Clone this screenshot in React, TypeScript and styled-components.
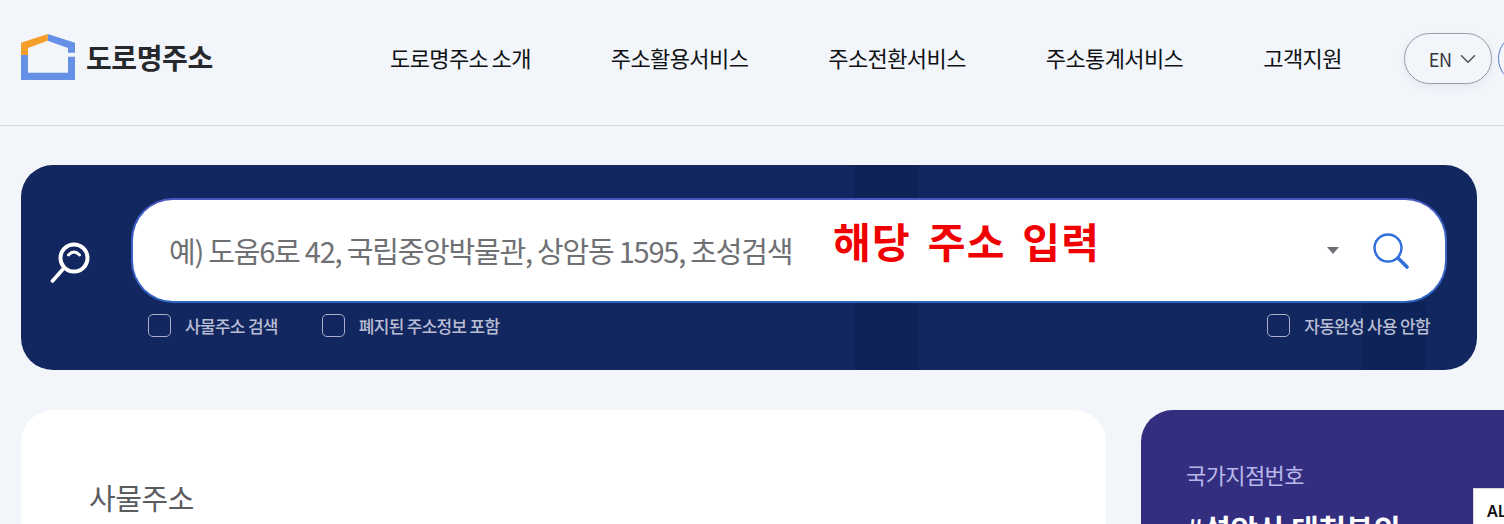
import styled, { createGlobalStyle } from 'styled-components';
import { ChevronDown } from 'lucide-react';

const GlobalStyle = createGlobalStyle`
  html, body {
    margin: 0;
    height: 524px;
    overflow: hidden;
    background: #f2f5fa;
  }
  * { box-sizing: border-box; }
  body {
    font-family: "Noto Sans CJK KR", "Noto Sans", sans-serif;
  }
`;

const Page = styled.div`
  width: 1504px;
  height: 524px;
  overflow: hidden;
`;

const Header = styled.header`
  display: flex;
  align-items: center;
  width: 1504px;
  height: 126px;
  padding: 0 0 8px 21px;
  border-bottom: 1px solid #d5d8de;
`;

const Logo = styled.div`
  display: flex;
  align-items: center;
  gap: 11px;
  width: 369px;
  margin-bottom: 4px;
  flex: none;
`;

const LogoText = styled.span`
  font-size: 28px;
  font-weight: 700;
  letter-spacing: -0.4px;
  color: #26282b;
  line-height: 1;
`;

const Nav = styled.nav`
  display: flex;
  gap: 80px;
  margin-bottom: 3px;
  flex: none;
`;

const NavLink = styled.a`
  font-size: 22px;
  font-weight: 400;
  letter-spacing: -0.6px;
  word-spacing: -1px;
  color: #0f1114;
  white-space: nowrap;
  line-height: 1;
`;

const Utilities = styled.div`
  display: flex;
  align-items: center;
  gap: 6px;
  margin-left: 62px;
  flex: none;
`;

const LangButton = styled.button`
  display: flex;
  align-items: center;
  gap: 3px;
  width: 88px;
  height: 51px;
  padding: 0 0 0 24px;
  border: 1px solid #9a9da3;
  border-radius: 26px;
  background: #f2f5fa;
  box-shadow: 0 3px 8px rgba(40, 50, 80, 0.07);
  color: #33363b;
  font: 400 18px "Noto Sans CJK KR", sans-serif;
  letter-spacing: -0.4px;
`;

const RoundButton = styled.button`
  width: 51px;
  height: 51px;
  padding: 0;
  flex: none;
  border: 1px solid #4f78c9;
  border-radius: 50%;
  background: #f2f5fa;
`;

const SearchPanel = styled.section`
  position: relative;
  display: flex;
  flex-direction: column;
  width: 1456px;
  height: 205px;
  margin: 39px 0 0 21px;
  padding: 33px 30px 0 110px;
  border-radius: 32px;
  background-color: #12275f;
  background-image:
    linear-gradient(#0e2357, #0e2357),
    linear-gradient(#0e2357, #0e2357);
  background-repeat: no-repeat;
  background-size: 64px 100%, 64px 68px;
  background-position: 833px 0, 1342px 100%;
`;

const PanelIcon = styled.svg`
  position: absolute;
  left: 29px;
  top: 77px;
`;

const SearchBox = styled.div`
  position: relative;
  display: flex;
  align-items: center;
  height: 105px;
  padding: 0 35px 0 36px;
  border: 2px solid;
  border-color: #4b57c0 #3b63c4 #2f65c2 #3b5fc6;
  border-radius: 42px;
  background: #fff;
`;

const Placeholder = styled.span`
  padding-bottom: 2px;
  font-size: 29px;
  font-weight: 400;
  letter-spacing: -1.22px;
  color: #6f7074;
  white-space: nowrap;
`;

const RedNote = styled.span`
  position: absolute;
  left: 700px;
  top: 10px;
  font-size: 41px;
  font-weight: 700;
  line-height: 60px;
  color: #f00000;
  letter-spacing: 1.3px;
  word-spacing: 6px;
  white-space: nowrap;
`;

const BoxActions = styled.div`
  display: flex;
  align-items: center;
  gap: 33px;
  margin-left: auto;
`;

const Caret = styled.span`
  width: 0;
  height: 0;
  border-left: 6px solid transparent;
  border-right: 6px solid transparent;
  border-top: 7px solid #6d6e73;
`;

const OptionRow = styled.div`
  display: flex;
  align-items: center;
  gap: 44px;
  height: 23px;
  margin-top: 11px;
  padding: 0 17px;
`;

const Option = styled.label<{ $push?: boolean }>`
  display: flex;
  align-items: center;
  gap: 14px;
  margin-left: ${(p) => (p.$push ? 'auto' : '0')};
  font-size: 17px;
  font-weight: 500;
  letter-spacing: -0.7px;
  color: #b9bdd4;
  white-space: nowrap;
`;

const CheckBox = styled.span`
  width: 23px;
  height: 23px;
  flex: none;
  border: 1px solid #aab0c8;
  border-radius: 5px;
`;

const Lower = styled.div`
  display: flex;
  gap: 35px;
  margin: 40px 0 0 21px;
`;

const MainCard = styled.section`
  width: 1085px;
  height: 200px;
  flex: none;
  padding: 65px 68px 0;
  border-radius: 32px;
  background: #fff;
`;

const CardTitle = styled.h2`
  margin: 0;
  font-size: 29px;
  font-weight: 400;
  letter-spacing: -0.4px;
  line-height: 44px;
  color: #5a5c60;
`;

const SideCard = styled.section`
  position: relative;
  width: 500px;
  height: 200px;
  flex: none;
  padding: 48px 45px 0;
  border-radius: 32px 0 0 32px;
  background: #332e80;
`;

const SideLabel = styled.div`
  font-size: 22px;
  font-weight: 400;
  letter-spacing: -0.6px;
  line-height: 32px;
  color: #b9b8ea;
`;

const SideHeadline = styled.div`
  margin-top: 16px;
  font-size: 30px;
  font-weight: 700;
  letter-spacing: -0.4px;
  line-height: 44px;
  color: #fff;
  white-space: nowrap;
`;

const AltTip = styled.div`
  position: absolute;
  left: 332px;
  top: 78px;
  width: 60px;
  height: 60px;
  padding: 10px 0 0 13px;
  border: 1px solid #d8d8d8;
  background: #fff;
  font: 600 16px "Noto Sans", sans-serif;
  line-height: 24px;
  color: #111;
`;

const navItems = ['도로명주소 소개', '주소활용서비스', '주소전환서비스', '주소통계서비스', '고객지원'];

export default function App() {
  return (
    <Page>
      <GlobalStyle />
      <Header>
        <Logo>
          <svg width="54" height="46" viewBox="0 0 54 46" aria-hidden="true">
            <path d="M0 21 V46 H54 V22.7 H47 V38.7 H7 V21 Z" fill="#6590e6" />
            <path d="M26.7 0 L54 8.7 V18.7 H47 V14 L26.7 6.7 Z" fill="#6590e6" />
            <path d="M26.7 0 L0 8.7 V21 H7 V14 L26.7 6.7 Z" fill="#f59e2c" />
          </svg>
          <LogoText>도로명주소</LogoText>
        </Logo>
        <Nav>
          {navItems.map((item) => (
            <NavLink key={item}>{item}</NavLink>
          ))}
        </Nav>
        <Utilities>
          <LangButton>
            EN
            <ChevronDown size={26} strokeWidth={1.5} color="#55585d" />
          </LangButton>
          <RoundButton />
        </Utilities>
      </Header>
      <SearchPanel>
        <PanelIcon width="40" height="44" viewBox="0 0 40 44" fill="none" stroke="#fff" aria-hidden="true">
          <circle cx="24" cy="16" r="13.5" strokeWidth="4" />
          <path d="M18.5 13 Q24 7 29.5 13" strokeWidth="3" strokeLinecap="round" />
          <path d="M14 26 L2.5 39" strokeWidth="3.6" strokeLinecap="round" />
        </PanelIcon>
        <SearchBox>
          <Placeholder>예) 도움6로 42, 국립중앙박물관, 상암동 1595, 초성검색</Placeholder>
          <RedNote>해당 주소 입력</RedNote>
          <BoxActions>
            <Caret />
            <svg width="38" height="38" viewBox="0 0 38 38" fill="none" stroke="#2f6fdb" aria-hidden="true">
              <circle cx="16" cy="16" r="13.5" strokeWidth="2.4" />
              <path d="M26 26 L35 35" strokeWidth="3.6" strokeLinecap="round" />
            </svg>
          </BoxActions>
        </SearchBox>
        <OptionRow>
          <Option>
            <CheckBox />
            사물주소 검색
          </Option>
          <Option>
            <CheckBox />
            폐지된 주소정보 포함
          </Option>
          <Option $push>
            <CheckBox />
            자동완성 사용 안함
          </Option>
        </OptionRow>
      </SearchPanel>
      <Lower>
        <MainCard>
          <CardTitle>사물주소</CardTitle>
        </MainCard>
        <SideCard>
          <SideLabel>국가지점번호</SideLabel>
          <SideHeadline>#설악산 대청봉의</SideHeadline>
          <AltTip>ALT</AltTip>
        </SideCard>
      </Lower>
    </Page>
  );
}
